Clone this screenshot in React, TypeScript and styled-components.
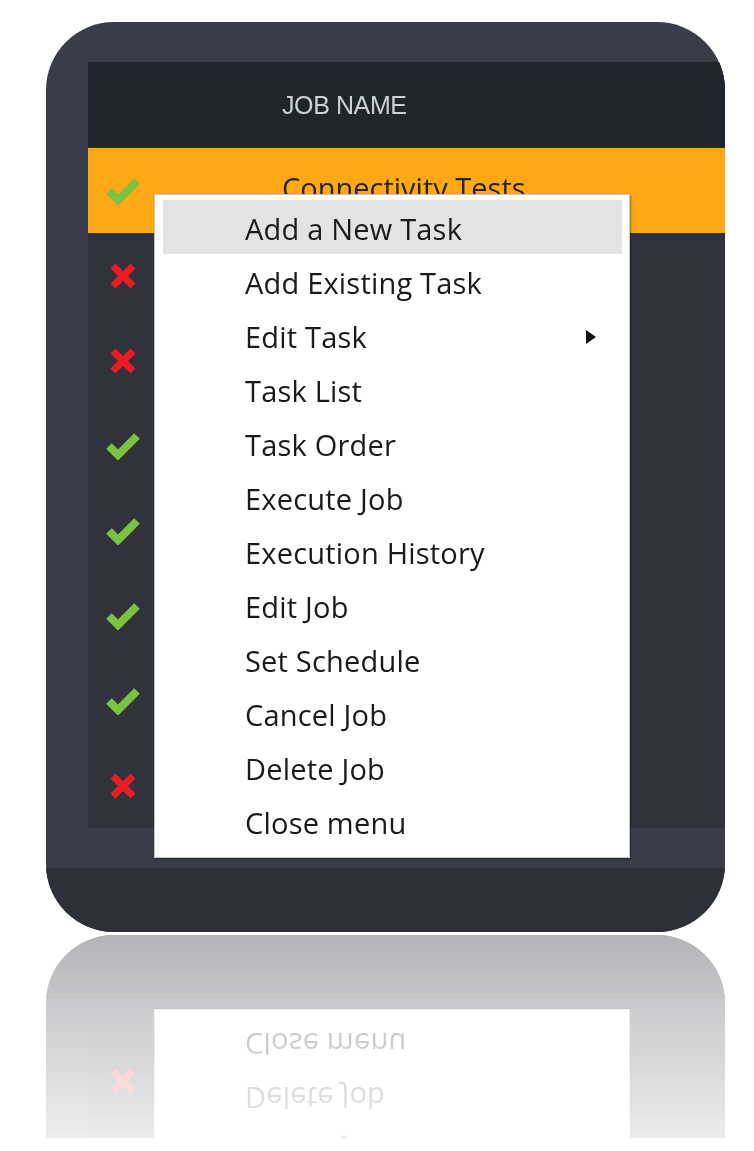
import React from 'react';
import styled, { createGlobalStyle } from 'styled-components';

const GlobalStyle = createGlobalStyle`
  html, body {
    margin: 0;
    padding: 0;
    background: #ffffff;
  }
  body {
    font-family: "Open Sans", "Noto Sans", sans-serif;
  }
`;

const Stage = styled.div`
  height: 1138px;
  overflow: hidden;
  padding: 22px 0 0 46px;
  box-sizing: border-box;
`;

const Frame = styled.div`
  position: relative;
  width: 679px;
  height: 910px;
  box-sizing: border-box;
  border-radius: 68px;
  overflow: hidden;
  background: #3a3d47;
  display: flex;
  flex-direction: column;
  padding-top: 40px;
  -webkit-box-reflect: below 3px linear-gradient(to bottom, transparent 70%, rgba(0, 0, 0, 0.36));
`;

const Table = styled.div`
  margin: 0 0 40px 42px;
  height: 766px;
  background: #30333c;
  display: flex;
  flex-direction: column;
`;

const HeaderRow = styled.div`
  height: 85px;
  flex-shrink: 0;
  background: #1f252c;
  border-bottom: 1px solid #2a2e35;
  display: grid;
  grid-template-columns: 70px 1fr;
  align-items: center;
`;

const HeaderLabel = styled.span`
  grid-column: 2;
  padding: 2px 0 0 124px;
  font-family: "Liberation Sans", Arial, sans-serif;
  font-size: 25px;
  letter-spacing: -0.4px;
  color: #cdd1d5;
`;

const Row = styled.div<{ $active?: boolean }>`
  height: 85px;
  flex-shrink: 0;
  background: ${(p) => (p.$active ? '#fea815' : '#30333c')};
  display: grid;
  grid-template-columns: 70px 1fr;
  align-items: center;
`;

const StatusCell = styled.div`
  display: flex;
  align-items: center;
  justify-content: center;
`;

const NameCell = styled.span`
  padding: 0 0 6px 124px;
  font-size: 29px;
  color: #262626;
  white-space: nowrap;
`;

const BottomBand = styled.div`
  flex: 1;
  background: #2e3039;
`;

const Menu = styled.div`
  position: absolute;
  left: 108px;
  top: 172px;
  width: 476px;
  box-sizing: border-box;
  padding: 5px 7px 9px 8px;
  background: #ffffff;
  border: 1px solid #c4c4c4;
  box-shadow: 1px 1px 2px rgba(0, 0, 0, 0.35);
  display: flex;
  flex-direction: column;
`;

const MenuItem = styled.div<{ $active?: boolean }>`
  height: 54px;
  display: flex;
  align-items: center;
  padding: 3px 0 0 82px;
  box-sizing: border-box;
  font-size: 29px;
  letter-spacing: 0.2px;
  color: #1a1a1a;
  background: ${(p) => (p.$active ? '#e3e3e3' : 'transparent')};
`;

const SubArrow = styled.span`
  margin-left: auto;
  margin-right: 26px;
  width: 0;
  height: 0;
  border-left: 10px solid #111111;
  border-top: 7px solid transparent;
  border-bottom: 7px solid transparent;
`;

const CheckIcon = () => (
  <svg width="34" height="28" viewBox="0 0 34 28">
    <polyline points="3,14 12,23 31,4" fill="none" stroke="#7cc242" strokeWidth="8" />
  </svg>
);

const CrossIcon = () => (
  <svg width="28" height="28" viewBox="0 0 28 28">
    <path d="M4 4 L24 24 M24 4 L4 24" fill="none" stroke="#ec1c24" strokeWidth="7" />
  </svg>
);

type Job = { ok: boolean; name?: string };

const jobs: Job[] = [
  { ok: true, name: 'Connectivity Tests' },
  { ok: false },
  { ok: false },
  { ok: true },
  { ok: true },
  { ok: true },
  { ok: true },
  { ok: false },
];

const menuItems = [
  'Add a New Task',
  'Add Existing Task',
  'Edit Task',
  'Task List',
  'Task Order',
  'Execute Job',
  'Execution History',
  'Edit Job',
  'Set Schedule',
  'Cancel Job',
  'Delete Job',
  'Close menu',
];

const App: React.FC = () => {
  return (
    <>
      <GlobalStyle />
      <Stage>
        <Frame>
          <Table>
            <HeaderRow>
              <HeaderLabel>JOB NAME</HeaderLabel>
            </HeaderRow>
            {jobs.map((job, i) => (
              <Row key={i} $active={i === 0}>
                <StatusCell>{job.ok ? <CheckIcon /> : <CrossIcon />}</StatusCell>
                {job.name && <NameCell>{job.name}</NameCell>}
              </Row>
            ))}
          </Table>
          <BottomBand />

          <Menu>
            {menuItems.map((label, i) => (
              <MenuItem key={label} $active={i === 0}>
                {label}
                {label === 'Edit Task' && <SubArrow />}
              </MenuItem>
            ))}
          </Menu>
        </Frame>
      </Stage>
    </>
  );
};

export default App;
